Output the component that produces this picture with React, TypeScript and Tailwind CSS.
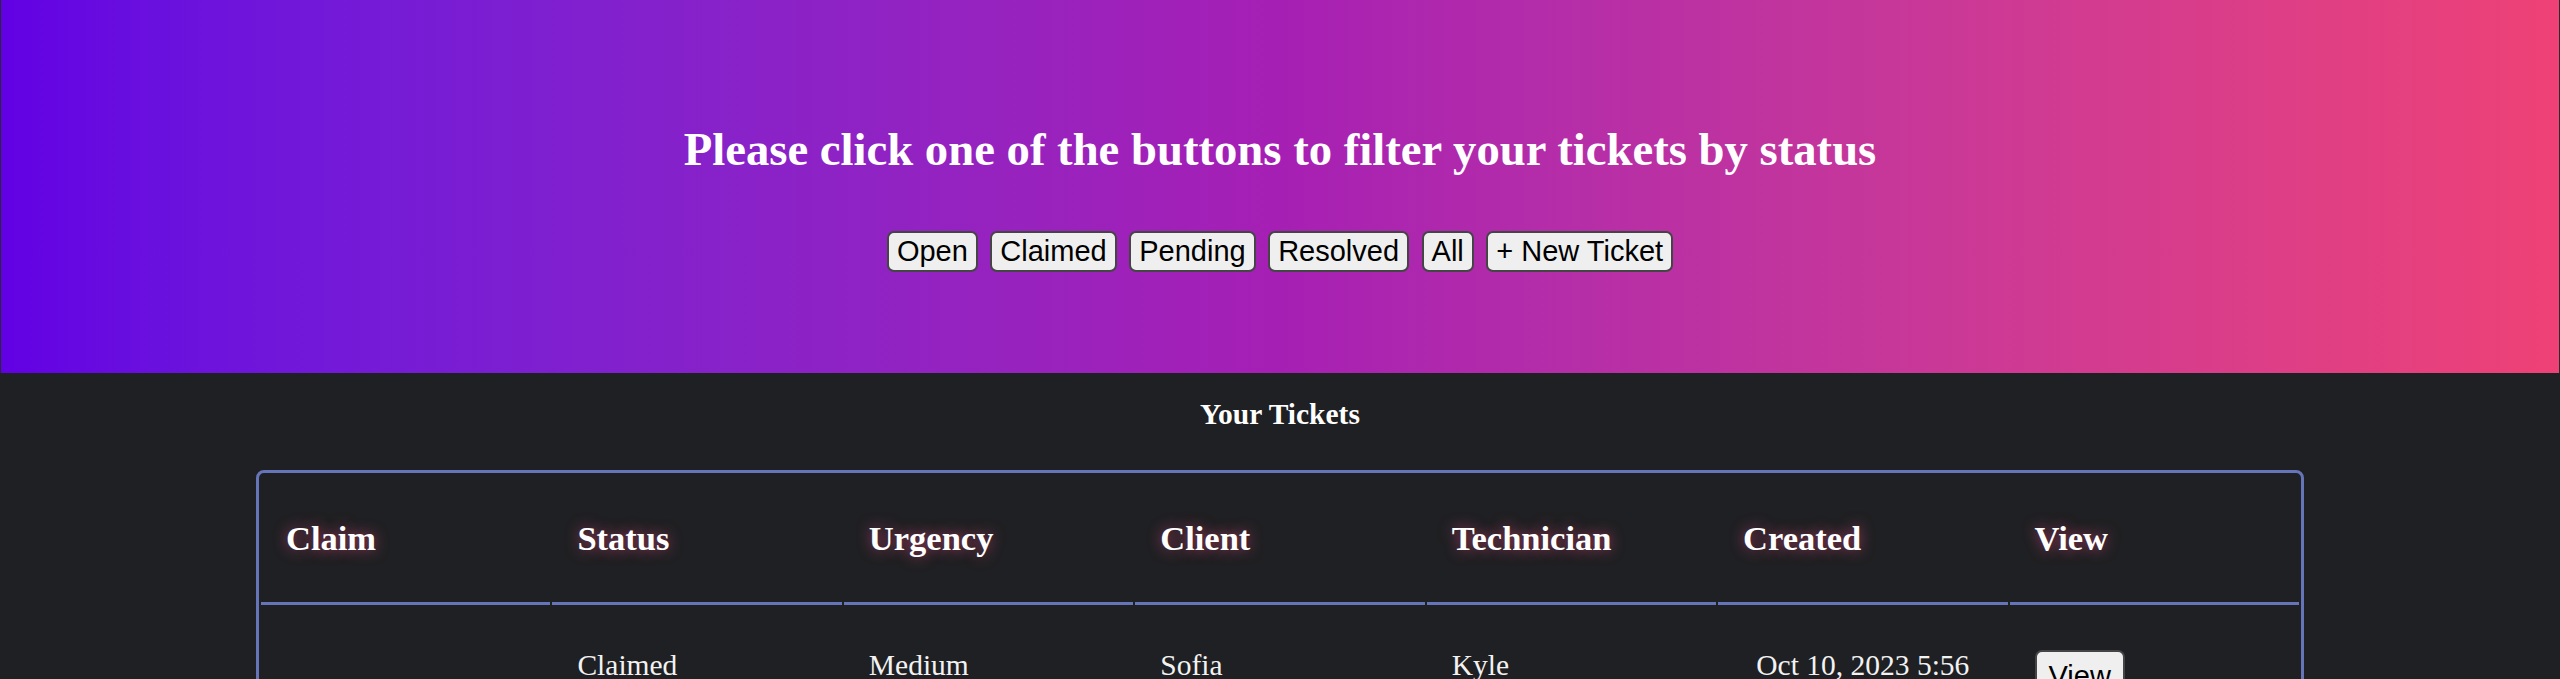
import React from 'react';

interface Ticket {
  id: number;
  status: string;
  urgency: string;
  client: string;
  technician: string;
  created: string;
}

const filters = ['Open', 'Claimed', 'Pending', 'Resolved', 'All', '+ New Ticket'];

const columns = ['Claim', 'Status', 'Urgency', 'Client', 'Technician', 'Created', 'View'];

const tickets: Ticket[] = [
  {
    id: 1,
    status: 'Claimed',
    urgency: 'Medium',
    client: 'Sofia',
    technician: 'Kyle',
    created: 'Oct 10, 2023 5:56 PM',
  },
];

const App: React.FC = () => {
  return (
    <div className="min-h-screen bg-[#1f2023] font-['Liberation_Serif','Times_New_Roman',serif] text-white">
      <header className="h-[373px] border-x border-[#2a2a2e] bg-gradient-to-r from-[#6200e4] via-[#a61fb4] to-[#ee4176] pt-[122px] text-center">
        <h1 className="text-[46.7px] font-bold leading-[normal]">
          Please click one of the buttons to filter your tickets by status
        </h1>
        <div className="mt-[55px] flex items-center justify-center gap-[12.5px]">
          {filters.map((label) => (
            <button
              key={label}
              className="rounded-[7px] border-2 border-[#454545] bg-[#efefef] px-[8px] py-[2px] font-['Liberation_Sans',Arial,sans-serif] text-[29px] leading-[normal] text-black"
            >
              {label}
            </button>
          ))}
        </div>
      </header>

      <h3 className="mt-[25px] mb-[39px] text-center text-[29.5px] font-bold leading-[normal]">Your Tickets</h3>

      <table className="mx-auto w-[80%] table-fixed border-separate border-spacing-[2px] rounded-[8px] border-[3px] border-[#6675b8]">
        <thead>
          <tr>
            {columns.map((col) => (
              <th
                key={col}
                className="border-b-[3px] border-[#6675b8] px-[25px] py-[44px] text-left text-[34.5px] font-bold leading-[normal] [text-shadow:0_0_14px_rgba(255,80,140,0.6)]"
              >
                {col}
              </th>
            ))}
          </tr>
        </thead>
        <tbody>
          {tickets.map((t) => (
            <tr key={t.id} className="align-top text-[29.5px] leading-[normal] text-[#f2f2f2]">
              <td className="px-[25px] pt-[42px]"></td>
              <td className="px-[25px] pt-[42px]">{t.status}</td>
              <td className="px-[25px] pt-[42px]">{t.urgency}</td>
              <td className="px-[25px] pt-[42px]">{t.client}</td>
              <td className="px-[25px] pt-[42px]">{t.technician}</td>
              <td className="px-[25px] pt-[42px] text-center">{t.created}</td>
              <td className="px-[25px] pt-[42px]">
                <button className="mt-[1px] rounded-[7px] border-2 border-[#454545] bg-[#efefef] px-[12px] py-[8px] font-['Liberation_Sans',Arial,sans-serif] text-[29px] leading-[normal] text-black">
                  View
                </button>
              </td>
            </tr>
          ))}
        </tbody>
      </table>
    </div>
  );
};

export default App;
